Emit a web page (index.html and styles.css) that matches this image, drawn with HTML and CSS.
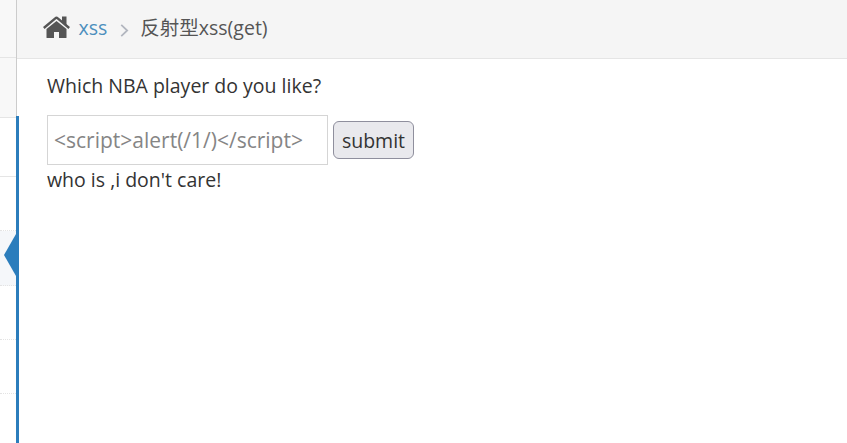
FILE: index.html
```
<!DOCTYPE html>
<html lang="zh">
<head>
<meta charset="utf-8">
<title>反射型xss(get)</title>
<link rel="stylesheet" href="styles.css">
</head>
<body>
<nav class="sidebar">
<div class="item shade first"></div>
<div class="item shade second"></div>
<div class="item third"></div>
<div class="item sub"></div>
<div class="item sub active"><svg class="arrow" viewBox="0 0 12 42"><path d="M12 0v42L0 21z"/></svg></div>
<div class="item sub"></div>
<div class="item sub"></div>
<div class="rail"></div>
</nav>
<main class="main">
<header class="crumbs">
<svg class="home" viewBox="0 0 27 23"><path d="M3.500 13 13.500 5 23.500 13v8.500q0 .5-.5.5H16v-6h-5v6H4q-.5 0-.5-.5z"/><path d="M.8 12 12.300 2.300q1.200-1 2.400 0L26.200 12" class="roof"/><path d="M19 .5h4.500v9L19 6z"/></svg>
<a class="link">xss</a>
<svg class="sep" viewBox="0 0 8 12"><path d="M1 .8l5.500 5.200L1 11.200"/></svg>
<span class="here">反射型xss(get)</span>
</header>
<section class="content">
<p class="question">Which NBA player do you like?</p>
<form class="form"><div class="field">&lt;script&gt;alert(/1/)&lt;/script&gt;</div><button class="submit" type="button">submit</button></form>
<p class="result">who is ,i don't care!</p>
</section>
</main>
</body>
</html>
```
FILE: styles.css
```
* { box-sizing: border-box; }
body { margin: 0; height: 443px; display: flex; overflow: hidden; background: #fff; color: #333; font: 19.5px/30px "Open Sans", "Noto Sans CJK SC", sans-serif; }
p { margin: 0; }
.sidebar { position: relative; width: 17px; border-right: 1px solid #ccc; display: flex; flex-direction: column; }
.item { flex: none; height: 54px; border-bottom: 1px solid #e5e5e5; }
.shade { background: #f8f8f8; }
.first { height: 58px; }
.second { height: 60px; }
.third { height: 59px; }
.sub { border-bottom: 1px dotted #e4e4e4; }
.active { position: relative; height: 55px; background: #f5f7fa; }
.arrow { position: absolute; right: 0; top: 3px; width: 12px; height: 42px; fill: #2b7dbc; }
.rail { position: absolute; left: 16px; top: 116px; bottom: 0; width: 3px; background: #2b7dbc; }
.main { flex: 1; }
.crumbs { height: 59px; padding: 0 0 2px 26px; display: flex; align-items: center; background: #f5f5f5; border-bottom: 1px solid #e5e5e5; }
.home { width: 27px; height: 23px; margin-bottom: 2px; fill: #555; }
.roof { fill: none; stroke: #555; stroke-width: 2.4; }
.link { color: #4c8fbd; margin-left: 8.5px; }
.sep { width: 9px; height: 13px; margin: 4px 11px 0 13px; fill: none; stroke: #b2b6bf; stroke-width: 1.6; }
.here { color: #555; }
.content { padding: 12px 30px; }
.form { display: flex; align-items: center; gap: 5px; margin-top: 14px; }
.field { width: 281px; height: 50px; border: 1px solid #d5d5d5; padding: 0 6px; font-size: 21px; line-height: 48px; color: #858585; }
.submit { width: 81px; height: 38px; padding: 2px 0 0; border: 1px solid #8f8f9d; border-radius: 6px; background: #e9e9ed; color: #333; font: inherit; }
```
